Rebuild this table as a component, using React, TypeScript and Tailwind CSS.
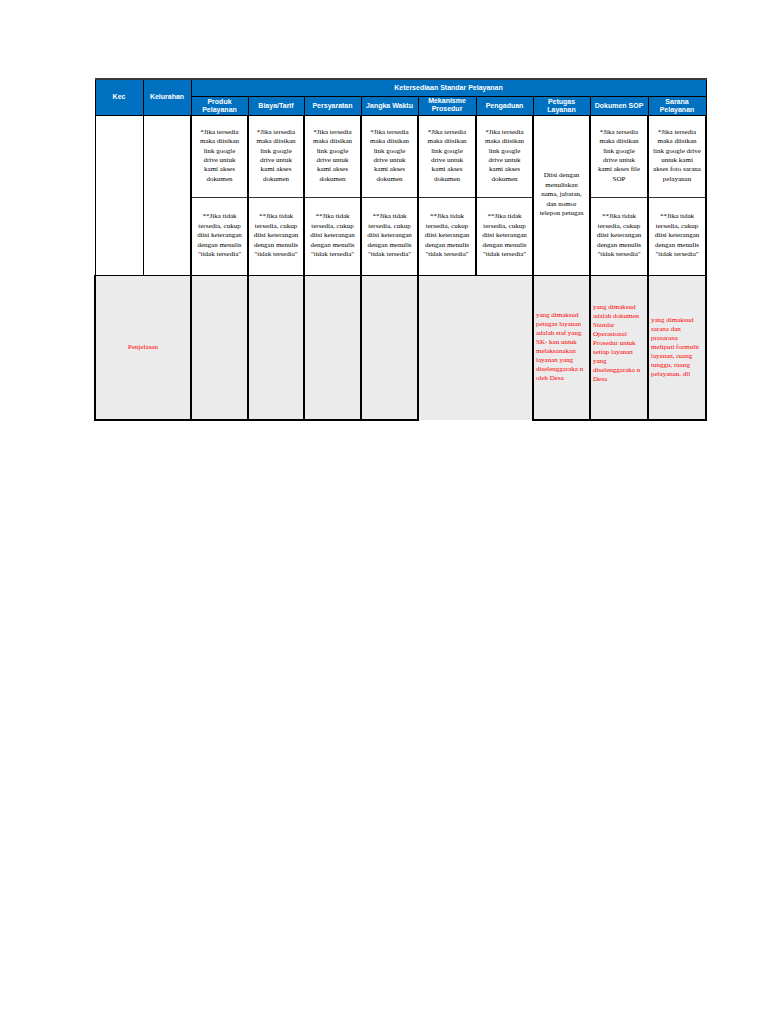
import React from 'react'

const widths = [48, 48, 57, 56, 57, 57, 58, 57, 57, 58, 58]

const head = 'border border-black bg-[#0070c0] text-white font-bold text-[7px] leading-[8px] text-center align-middle p-0'
const cell = 'border-x-2 border-y border-x-black border-y-[#333] text-[7px] leading-[9.4px] text-center align-middle px-0 py-0 whitespace-nowrap text-black'
const grey = 'border-x-2 border-b-2 border-black bg-[#ebebeb] align-middle p-0'
const note = 'border-x-2 border-b-2 border-black bg-[#ebebeb] text-[7px] leading-[9px] text-left align-middle pl-[2px] pr-0 py-0 whitespace-nowrap text-[#ff0000]'

const tersedia = ['*Jika tersedia', 'maka diisikan', 'link google', 'drive untuk', 'kami akses', 'dokumen']
const tidak = ['**Jika tidak', 'tersedia, cukup', 'diisi keterangan', 'dengan menulis', '"tidak tersedia"']

function Lines({ lines }: { lines: string[] }) {
  return (
    <>
      {lines.map((l, i) => (
        <div key={i}>{l}</div>
      ))}
    </>
  )
}

export default function App() {
  return (
    <div className="min-h-screen bg-white pt-[78px] pl-[94px]" style={{ fontFamily: '"Liberation Serif", serif' }}>
      <table className="border-collapse table-fixed w-[612px] border-t-2 border-t-[#3a3a3a]">
        <colgroup>
          {widths.map((w, i) => (
            <col key={i} style={{ width: w }} />
          ))}
        </colgroup>
        <tbody style={{ fontFamily: '"Liberation Sans", Arial, sans-serif' }}>
          <tr className="h-[17px]">
            <td rowSpan={2} className={head}>Kec</td>
            <td rowSpan={2} className={head}>Kelurahan</td>
            <td colSpan={9} className={head}>Ketersediaan Standar Pelayanan</td>
          </tr>
          <tr className="h-[19px]">
            <td className={head}>Produk<br />Pelayanan</td>
            <td className={head}>Biaya/Tarif</td>
            <td className={head}>Persyaratan</td>
            <td className={head}>Jangka Waktu</td>
            <td className={`${head} align-top`}>Mekanisme<br />Prosedur</td>
            <td className={head}>Pengaduan</td>
            <td className={head}>Petugas<br />Layanan</td>
            <td className={head}>Dokumen SOP</td>
            <td className={head}>Sarana<br />Pelayanan</td>
          </tr>
        </tbody>
        <tbody style={{ fontFamily: '"Liberation Serif", serif' }}>
          <tr className="h-[82px]">
            <td rowSpan={2} className="border-x border-b border-black"></td>
            <td rowSpan={2} className="border-x border-b border-black"></td>
            {[0, 1, 2, 3, 4, 5].map(i => (
              <td key={i} className={cell}><Lines lines={tersedia} /></td>
            ))}
            <td rowSpan={2} className={`${cell} border-b-black`}>
              <Lines lines={['Diisi dengan', 'menuliskan', 'nama, jabatan,', 'dan nomor', 'telepon petugas']} />
            </td>
            <td className={cell}>
              <Lines lines={['*Jika tersedia', 'maka diisikan', 'link google', 'drive untuk', 'kami akses file', 'SOP']} />
            </td>
            <td className={cell}>
              <Lines lines={['*Jika tersedia', 'maka diisikan', 'link google drive', 'untuk kami', 'akses foto sarana', 'pelayanan']} />
            </td>
          </tr>
          <tr className="h-[78px]">
            {[0, 1, 2, 3, 4, 5, 6, 7].map(i => (
              <td key={i} className={`${cell} border-b-black`}><Lines lines={tidak} /></td>
            ))}
          </tr>
          <tr className="h-[145px]">
            <td colSpan={2} className={`${grey} border-l-2 text-center text-[7px] text-[#ff0000]`}>Penjelasan</td>
            {[0, 1, 2, 3].map(i => (
              <td key={i} className={grey}></td>
            ))}
            <td colSpan={2} className="border-x-2 border-x-black border-b-0 bg-[#ebebeb]"></td>
            <td className={note}>
              <Lines lines={['yang dimaksud', 'petugas layanan', 'adalah staf yang', 'SK- kan untuk', 'melaksanakan', 'layanan yang', 'diselenggaraka n', 'oleh Desa']} />
            </td>
            <td className={`${note} align-top pt-[27px]`}>
              <Lines lines={['yang dimaksud', 'adalah dokumen', 'Standar', 'Operasional', 'Prosedur untuk', 'setiap layanan', 'yang', 'diselenggaraka n', 'Desa']} />
            </td>
            <td className={note}>
              <Lines lines={['yang dimaksud', 'sarana dan', 'prasarana', 'meliputi formulir', 'layanan, ruang', 'tunggu, ruang', 'pelayanan, dll']} />
            </td>
          </tr>
        </tbody>
      </table>
    </div>
  )
}
